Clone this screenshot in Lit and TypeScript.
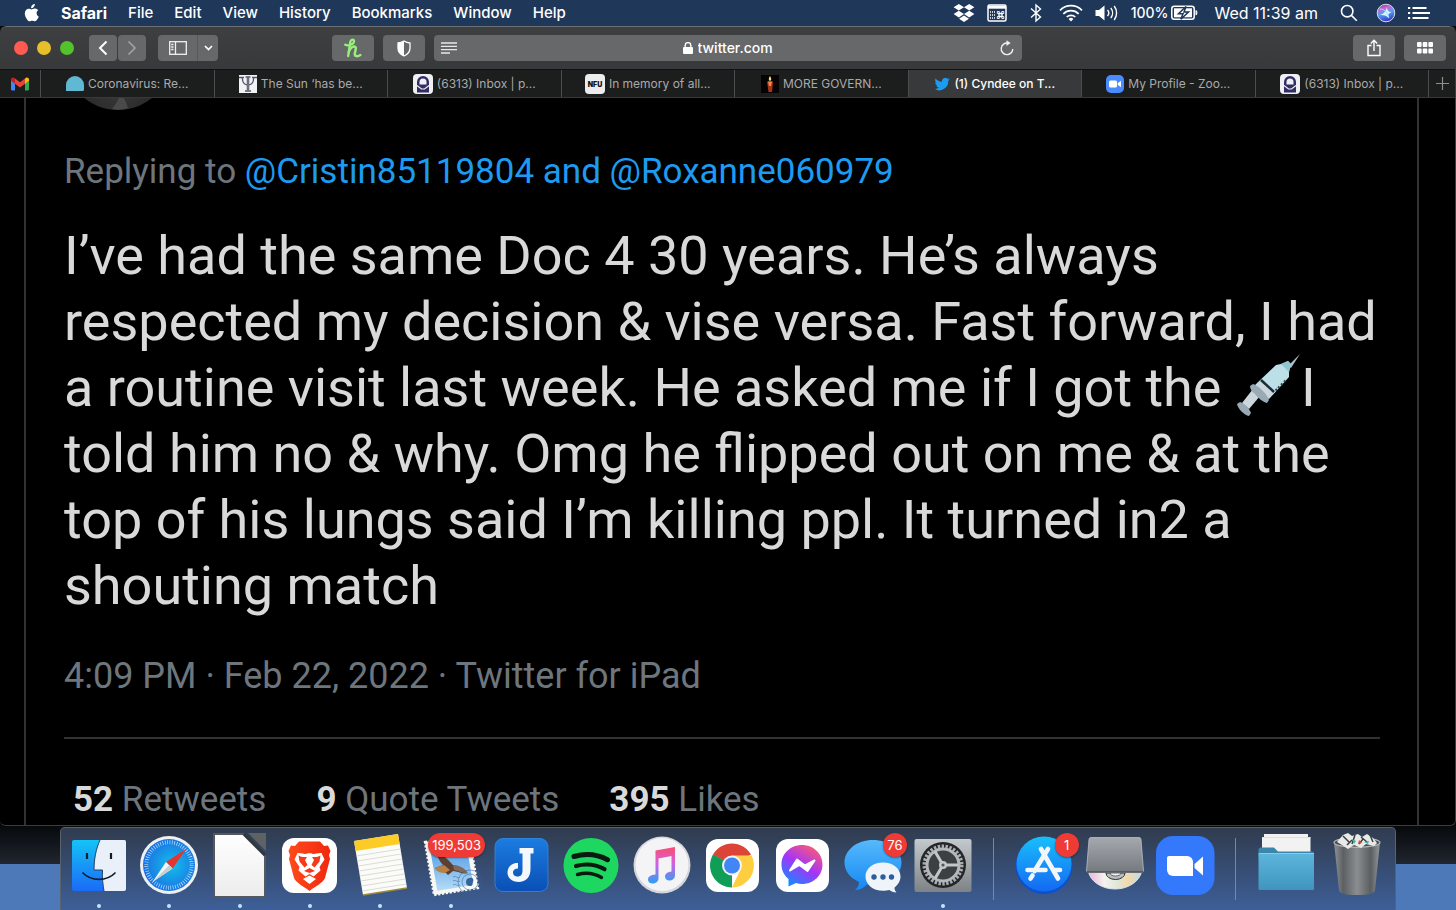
import { LitElement, html, svg, css, nothing, type TemplateResult } from "lit";
import { customElement, property } from "lit/decorators.js";
import { classMap } from "lit/directives/class-map.js";

type Art = TemplateResult;

const range = (n: number) => Array.from({ length: n }, (_, i) => i);

/* ---------- Menu bar ---------- */

@customElement("menu-bar")
export class MenuBar extends LitElement {
  static styles = css`
    :host {
      display: flex;
      align-items: center;
      height: 26px;
      flex: none;
      padding: 0 26px 0 23px;
      background: #1f3759;
      color: #fff;
      font: 500 15px/24px Inter, "Liberation Sans", sans-serif;
    }
    nav {
      display: flex;
      align-items: center;
      gap: 21px;
    }
    button {
      all: unset;
      white-space: nowrap;
      cursor: default;
    }
    .app {
      font-size: 16px;
      font-weight: 700;
    }
    .status {
      display: flex;
      align-items: center;
      margin-left: auto;
      gap: 12px;
    }
    .power {
      display: flex;
      align-items: center;
      gap: 3px;
      font-size: 14px;
    }
    .clock {
      margin: 0 10px 0 4px;
      font-size: 16px;
      font-weight: 400;
      white-space: nowrap;
    }
    .tight {
      margin-left: 6px;
    }
    svg {
      display: block;
    }
  `;

  render() {
    const menus = ["File", "Edit", "View", "History", "Bookmarks", "Window", "Help"];
    return html`
      <nav aria-label="Application menu">
        <button aria-label="Apple menu">
          <svg width="17" height="20" viewBox="0 0 17 20" fill="#fff">
            <path d="M11.8 1c.1 1.2-.4 2.2-1.1 3-.7.8-1.7 1.3-2.6 1.2-.1-1.1.4-2.200 1-2.900C9.800 1.500 11 1 11.800 1zM15.300 7.300c-1.200.8-1.700 1.700-1.700 2.900 0 1.500.9 2.700 2.200 3.200-.4 1.200-1 2.300-1.700 3.200-.7 1-1.300 1.700-2.300 1.700s-1.400-.6-2.600-.6-1.700.6-2.700.6-1.700-.8-2.400-1.800C2.700 14.600 1.800 12.500 1.800 10.500c0-3.100 2-4.800 4-4.800 1.100 0 2 .7 2.700.7s1.700-.8 3-.8c.5 0 2.500.1 3.800 1.700z"/>
          </svg>
        </button>
        <button class="app">Safari</button>
        ${menus.map((m) => html`<button>${m}</button>`)}
      </nav>
      <div class="status">
        <button aria-label="Dropbox">
          <svg width="22" height="20" viewBox="0 0 22 20" fill="#fff">
            <path d="M5.800 1 11 4.300 5.800 7.600.6 4.300zM16.200 1l5.200 3.300-5.200 3.300L11 4.300zM5.800 7.800 11 11.100l-5.200 3.300L.6 11.100zM16.200 7.800l5.200 3.300-5.200 3.300L11 11.100zM11 12.500l5 3.200-5 3.300-5-3.300z"/>
          </svg>
        </button>
        <button aria-label="Keyboard viewer">
          <svg width="20" height="18" viewBox="0 0 20 18" fill="none" stroke="#fff">
            <rect x="1" y="1" width="18" height="16" rx="1.500" stroke-width="1.500"/>
            <path d="M1 3.200h18" stroke-width="3"/>
            <path d="M3 8h5M3 11h5M3 14h5" stroke-width="1.300" stroke-dasharray="1 1"/>
            <path d="M11.300 9.500h4.400M11.300 12.500h4.400M12 8.800v4.400M15 8.800v4.400" stroke-width="1.300"/>
            <path d="M10.300 7.500h2v2h-2zM14.800 7.500h2v2h-2zM10.300 12.500h2v2h-2zM14.800 12.500h2v2h-2z" stroke-width=".9"/>
          </svg>
        </button>
        <button class="tight" aria-label="Bluetooth">
          <svg width="22" height="20" viewBox="0 0 22 20" fill="none" stroke="#fff" stroke-width="1.400">
            <path d="m6 5.500 9.500 8.500L11 18V2l4.500 4L6 14.500"/>
          </svg>
        </button>
        <button aria-label="Wi-Fi">
          <svg width="24" height="18" viewBox="0 0 24 18" fill="none" stroke="#fff" stroke-width="1.700">
            <path d="M1 6.300a15.500 15.500 0 0 1 22 0M4.300 9.800a11 11 0 0 1 15.400 0M7.700 13a6.300 6.300 0 0 1 8.600 0"/>
            <path d="m9.600 15 2.400 2.600 2.400-2.600a3.400 3.400 0 0 0-4.800 0z" fill="#fff" stroke="none"/>
          </svg>
        </button>
        <button aria-label="Volume">
          <svg width="24" height="18" viewBox="0 0 24 18" fill="none" stroke="#fff" stroke-width="1.400">
            <path d="M.5 6H4l5.500-4.500v15L4 12H.5z" fill="#fff" stroke="none"/>
            <path d="M12.500 6a4.500 4.500 0 0 1 0 6M15.800 4a8 8 0 0 1 0 10M19.200 2a11.500 11.500 0 0 1 0 14"/>
          </svg>
        </button>
        <span class="power">
          100%
          <svg width="27" height="16" viewBox="0 0 27 16">
            <rect x=".8" y="1.300" width="22.400" height="13" rx="2.500" fill="none" stroke="#fff" stroke-width="1.500"/>
            <path d="M3 3.300h18v9H3z" fill="#fff"/>
            <path d="M25 5.500c1.200.4 1.200 4.200 0 4.600z" fill="#fff" stroke="#fff"/>
            <path d="M15 1.500 7.500 8.700H12L9.800 14.300l7.700-7.200H13z" fill="#fff" stroke="#1f3759" stroke-width="1.500"/>
          </svg>
        </span>
        <span class="clock">Wed 11:39 am</span>
        <button aria-label="Spotlight">
          <svg width="18" height="18" viewBox="0 0 18 18" fill="none" stroke="#fff" stroke-width="1.600">
            <circle cx="7.200" cy="7.200" r="5.700"/><path d="m11.400 11.400 5.400 5.400"/>
          </svg>
        </button>
        <button class="tight" aria-label="Siri">
          <svg width="20" height="20" viewBox="0 0 20 20">
            <defs>
              <linearGradient id="siri" x1="0" y1="0" x2=".3" y2="1">
                <stop offset="0" stop-color="#4a2f8f"/><stop offset=".3" stop-color="#d35fd0"/>
                <stop offset=".6" stop-color="#4aa5f5"/><stop offset="1" stop-color="#3e3bd1"/>
              </linearGradient>
            </defs>
            <circle cx="10" cy="10" r="8.800" fill="url(#siri)" stroke="#d8dbe6" stroke-width="1"/>
            <path d="M3.500 12C7 11.500 9.500 9 11 4c.2 3 .8 4.500 4.500 5.500-3 .6-3.800 2-2.500 6-2.500-3-4.500-3.800-9.500-3.500z" fill="#d9f4ff"/>
            <path d="M4 6c4 0 7 2.500 9 9" stroke="#8fe6ff" fill="none"/>
          </svg>
        </button>
        <button aria-label="Notification Centre">
          <svg width="22" height="14" viewBox="0 0 22 14" stroke="#fff" stroke-width="2">
            <path d="M0 2h2.200M0 7h2.200M0 12h2.200M4.500 2h14M4.500 7h17.500M4.500 12h16"/>
          </svg>
        </button>
      </div>
    `;
  }
}

/* ---------- Browser toolbar ---------- */

@customElement("browser-toolbar")
export class BrowserToolbar extends LitElement {
  static styles = css`
    :host {
      display: grid;
      grid-template-columns: 1fr minmax(0, 588px) 1fr;
      align-items: center;
      gap: 9px;
      height: 42px;
      padding: 0 9px;
      background: linear-gradient(#3e3f40, #38393b);
      border-top: 1px solid #6b6e72;
      border-radius: 6px 6px 0 0;
      font: 500 14px/26px Inter, "Liberation Sans", sans-serif;
      color: #fff;
    }
    .left,
    .right {
      display: flex;
      align-items: center;
    }
    .lights {
      display: flex;
      gap: 9px;
      margin: 0 15px 0 5px;
    }
    .light {
      all: unset;
      width: 14px;
      height: 14px;
      border-radius: 50%;
    }
    .red { background: #ff5b52; }
    .yellow { background: #e6c02a; }
    .green { background: #53c22b; }
    .tool {
      all: unset;
      box-sizing: border-box;
      display: grid;
      place-items: center;
      height: 26px;
      width: 42px;
      border-radius: 4px;
      background: #66686a;
    }
    .nav {
      width: 28px;
      margin-right: 1px;
    }
    .side {
      width: 39px;
      margin-left: 11px;
      border-radius: 4px 0 0 4px;
    }
    .drop {
      width: 21px;
      border-left: 1px solid #58595b;
      border-radius: 0 4px 4px 0;
    }
    .ext {
      display: flex;
      gap: 9px;
      margin-left: auto;
    }
    .address {
      display: grid;
      grid-template-columns: 30px 1fr 30px;
      align-items: center;
      height: 26px;
      border-radius: 4px;
      background: #66686a;
    }
    .icon {
      all: unset;
      display: grid;
      place-items: center;
    }
    .site {
      display: flex;
      justify-content: center;
      align-items: center;
      gap: 5px;
    }
    input {
      all: unset;
      width: 75px;
    }
    .right {
      justify-content: flex-end;
      gap: 9px;
    }
    svg {
      display: block;
    }
  `;

  render() {
    return html`
      <div class="left">
        <div class="lights">
          <button class="light red" aria-label="Close"></button>
          <button class="light yellow" aria-label="Minimise"></button>
          <button class="light green" aria-label="Full screen"></button>
        </div>
        <button class="tool nav" aria-label="Back">
          <svg width="12" height="16" viewBox="0 0 12 16" fill="none" stroke="#fff" stroke-width="2"><path d="M9.500 1.500 3 8l6.500 6.500"/></svg>
        </button>
        <button class="tool nav" aria-label="Forward">
          <svg width="12" height="16" viewBox="0 0 12 16" fill="none" stroke="#a2a3a4" stroke-width="1.600"><path d="M2.500 1.500 9 8l-6.500 6.500"/></svg>
        </button>
        <button class="tool side" aria-label="Show sidebar">
          <svg width="18" height="14" viewBox="0 0 18 14" fill="none" stroke="#f2f2f2" stroke-width="1.300">
            <rect x=".7" y=".7" width="16.600" height="12.600"/><path d="M6.500 1v12M2.200 3.500h2.300M2.200 6h2.300M2.200 8.500h2.300"/>
          </svg>
        </button>
        <button class="tool drop" aria-label="Sidebar options">
          <svg width="9" height="6" viewBox="0 0 9 6" fill="none" stroke="#fff" stroke-width="1.700"><path d="m1 1 3.500 3.500L8 1"/></svg>
        </button>
        <div class="ext">
          <button class="tool" aria-label="Honey">
            <svg width="18" height="20" viewBox="0 0 18 20" fill="none" stroke="#98ef7c" stroke-linecap="round" stroke-linejoin="round">
              <path d="M1.300 6.800c3 1.300 8.500-.2 8.700-3.600.1-2.500-3.300-2.200-3.800 1L4.200 18" stroke-width="2.300"/>
              <path d="M4.800 14c1-3.300 3.500-5.800 5.500-5.500 3 .4.700 4.500.5 7.200-.1 3 3 3 5.500 1.300" stroke-width="2.500"/>
            </svg>
          </button>
          <button class="tool" aria-label="Privacy report">
            <svg width="14" height="17" viewBox="0 0 14 17">
              <path d="M7 1c2 1.300 4 1.900 6 2v5c0 4-2.500 6.500-6 8-3.500-1.500-6-4-6-8V3c2-.1 4-.7 6-2z" fill="none" stroke="#fff" stroke-width="1.300"/>
              <path d="M7 1v15c-3.500-1.500-6-4-6-8V3c2-.1 4-.7 6-2z" fill="#fff"/>
            </svg>
          </button>
        </div>
      </div>
      <div class="address">
        <button class="icon" aria-label="Reader">
          <svg width="16" height="12" viewBox="0 0 16 12" stroke="#e8e8e8" stroke-width="1.300"><path d="M0 1h16M0 4.300h16M0 7.600h16M0 11h9"/></svg>
        </button>
        <div class="site">
          <svg width="10" height="12" viewBox="0 0 10 12"><rect x="0" y="5" width="10" height="7" rx="1" fill="#fff"/><path d="M2.200 5V3.400a2.800 2.800 0 0 1 5.600 0V5" fill="none" stroke="#fff" stroke-width="1.400"/></svg>
          <input aria-label="Address" value="twitter.com" />
        </div>
        <button class="icon" aria-label="Reload">
          <svg width="14" height="16" viewBox="0 0 14 16" fill="none" stroke="#f0f0f0" stroke-width="1.400"><path d="M8 3.100A5.800 5.800 0 1 0 12.800 9"/><path d="M6.500.3 10.600 3.100 6.500 6z" fill="#f0f0f0" stroke="none"/></svg>
        </button>
      </div>
      <div class="right">
        <button class="tool" aria-label="Share">
          <svg width="14" height="18" viewBox="0 0 14 18" fill="none" stroke="#fff" stroke-width="1.400"><path d="M4.500 6.500H1v10h12v-10H9.500M7 12V1.500M3.800 4.500 7 1.300l3.200 3.200"/></svg>
        </button>
        <button class="tool" aria-label="Tab overview">
          <svg width="16" height="12" viewBox="0 0 16 12" fill="#fff"><rect width="4.600" height="5" rx="1"/><rect x="5.700" width="4.600" height="5" rx="1"/><rect x="11.400" width="4.600" height="5" rx="1"/><rect y="6.500" width="4.600" height="5" rx="1"/><rect x="5.700" y="6.500" width="4.600" height="5" rx="1"/><rect x="11.400" y="6.500" width="4.600" height="5" rx="1"/></svg>
        </button>
      </div>
    `;
  }
}

/* ---------- Tab strip ---------- */

const favicons: Record<string, Art> = {
  dome: html`<svg width="18" height="20" viewBox="0 0 18 20"><path d="M0 17V11a9 9 0 0 1 18 0v4.500a1.500 1.500 0 0 1-1.500 1.500z" fill="#5fb9d3"/></svg>`,
  psi: html`<svg width="18" height="18" viewBox="0 0 18 18"><rect width="18" height="18" fill="#f2f2f4"/><path d="M0 2.500h5M13 2.500h5M3.500 2.500c-.5 5 2 7.500 5.500 7.500s6-2.500 5.500-7.500M6 16h6M6.500 2h5" fill="none" stroke="#55566b" stroke-width="1.300"/><path d="M9 1.500V16" stroke="#6d6e80" stroke-width="2.600"/></svg>`,
  mail: html`<svg width="20" height="20" viewBox="0 0 20 20"><rect width="20" height="20" rx="4" fill="#efeff4"/><path d="M4 18.500V8a6 6 0 0 1 12 0v10.500z" fill="#312e66"/><path d="M6.500 10.500V8a3.500 3.500 0 0 1 7 0v2.500z" fill="#efeff4"/><path d="m4 11.500 4.500 3.500h3l4.500-3.500" fill="none" stroke="#efeff4" stroke-width="1.200"/></svg>`,
  nfu: html`<svg width="20" height="20" viewBox="0 0 20 20"><rect width="20" height="20" rx="4" fill="#ececec"/><text x="10" y="13" text-anchor="middle" font-family="Inter, sans-serif" font-size="7" font-weight="900" fill="#111">NFU</text></svg>`,
  candle: html`<svg width="18" height="18" viewBox="0 0 18 18"><rect width="18" height="18" fill="#050303"/><path d="M9 1c1.800 2.500 1.500 4.500 0 5-1.500-.5-1.800-2.500 0-5z" fill="#ffd98a"/><path d="M6 6.500h6L11 17H7.500z" fill="#a83418"/><path d="M7 6.500h4L10 11H8z" fill="#f08a4b"/></svg>`,
  bird: html`<svg width="16" height="16" viewBox="0 0 24 24"><path fill="#1d9bf0" d="M23.600 4.900c-.8.400-1.700.6-2.700.8 1-.6 1.700-1.500 2-2.600-.9.500-1.900.9-3 1.100A4.700 4.700 0 0 0 12 8.500C8 8.300 4.600 6.400 2.300 3.600c-1.200 2.200-.6 4.900 1.400 6.300-.8 0-1.500-.2-2.100-.6 0 2.300 1.600 4.200 3.800 4.700-.7.200-1.400.2-2.100.1.600 1.900 2.300 3.200 4.400 3.300A9.500 9.500 0 0 1 .7 19.300a13.400 13.400 0 0 0 20.600-11.900c.9-.7 1.700-1.500 2.300-2.500z"/></svg>`,
  zoom: html`<svg width="18" height="18" viewBox="0 0 18 18"><rect width="18" height="18" rx="5" fill="#4a8cff"/><rect x="3" y="5.500" width="8" height="7" rx="1.500" fill="#fff"/><path d="m11.700 8.200 3.300-2.400v6.400l-3.300-2.400z" fill="#fff"/></svg>`,
};

@customElement("tab-strip")
export class TabStrip extends LitElement {
  static styles = css`
    :host {
      display: flex;
      height: 29px;
      box-sizing: border-box;
      background: #1c1d1d;
      border-top: 1px solid #111;
      border-bottom: 1px solid #39393b;
      font: 400 12px/24px Inter, "Liberation Sans", sans-serif;
      color: #a9aaab;
    }
    button {
      all: unset;
      box-sizing: border-box;
      display: flex;
      align-items: center;
      justify-content: center;
      gap: 4px;
      border-right: 1px solid #4b4c4d;
      white-space: nowrap;
    }
    .tab {
      flex: 1 1 0;
      min-width: 0;
      overflow: hidden;
    }
    .pinned {
      flex: none;
      width: 41px;
    }
    .active {
      background: #38393b;
      color: #fff;
      font-weight: 500;
    }
    .new {
      flex: none;
      width: 26px;
      border-right: 0;
    }
    svg {
      flex: none;
    }
  `;

  render() {
    const tabs = [
      { icon: "dome", label: "Coronavirus: Re..." },
      { icon: "psi", label: "The Sun ‘has be..." },
      { icon: "mail", label: "(6313) Inbox | p..." },
      { icon: "nfu", label: "In memory of all..." },
      { icon: "candle", label: "MORE GOVERN..." },
      { icon: "bird", label: "(1) Cyndee on T...", active: true },
      { icon: "zoom", label: "My Profile - Zoo..." },
      { icon: "mail", label: "(6313) Inbox | p..." },
    ];
    return html`
      <button class="pinned" aria-label="Gmail">
        <svg width="18" height="14" viewBox="0 0 18 14">
          <path d="M0 2.500v9.800c0 .7.500 1.200 1.200 1.200H4V6z" fill="#4285f4"/>
          <path d="M18 2.500v9.800c0 .7-.5 1.200-1.200 1.200H14V6z" fill="#34a853"/>
          <path d="M0 2.500C0 .7 2 0 3.300 1L4 1.500V6.700L0 3.700z" fill="#c5221f"/>
          <path d="M4 1.500 9 5.300l5-3.800v5.200l-5 3.800-5-3.800z" fill="#ea4335"/>
          <path d="M18 2.500C18 .7 16 0 14.700 1l-.7.500V6.700l4-3z" fill="#fbbc04"/>
        </svg>
      </button>
      ${tabs.map(
        (t) => html`<button class=${classMap({ tab: true, active: !!t.active })}>${favicons[t.icon]}<span>${t.label}</span></button>`,
      )}
      <button class="new" aria-label="New tab">
        <svg width="13" height="13" viewBox="0 0 13 13" stroke="#8c8d8e" stroke-width="1.200"><path d="M6.500 0v13M0 6.500h13"/></svg>
      </button>
    `;
  }
}

/* ---------- Tweet ---------- */

@customElement("tweet-view")
export class TweetView extends LitElement {
  static styles = css`
    :host {
      display: block;
      flex: 1;
      min-height: 0;
      overflow: hidden;
      padding: 0 36px 0 24px;
      background: #000;
      font-family: Roboto, "Liberation Sans", sans-serif;
    }
    article {
      padding: 0 37px 0 38px;
      border: solid #2f3336;
      border-width: 0 2px;
    }
    .avatar {
      display: block;
      width: 108px;
      height: 108px;
      margin-top: -96px;
    }
    p {
      margin: 0;
    }
    .replying {
      margin-top: 37px;
      font-size: 35px;
      line-height: 50px;
      color: #6e767d;
    }
    a {
      color: #1d9bf0;
      text-decoration: none;
    }
    .body {
      margin-top: 26px;
      font-size: 54px;
      line-height: 66px;
      color: #d9d9d9;
      white-space: nowrap;
    }
    .emoji {
      width: 66px;
      height: 66px;
      margin: -12px 0;
      vertical-align: -1px;
    }
    .meta {
      margin-top: 32px;
      font-size: 36px;
      line-height: 50px;
      color: #6e767d;
    }
    .stats {
      display: flex;
      gap: 50px;
      margin-top: 36px;
      padding: 39px 9px 24px;
      border-top: 2px solid #2f3336;
      font-size: 35px;
      line-height: 44px;
    }
    .stats a {
      color: #6e767d;
    }
    .stats strong {
      color: #d9d9d9;
      font-weight: 700;
    }
  `;

  render() {
    const stats = [
      ["52", "Retweets"],
      ["9", "Quote Tweets"],
      ["395", "Likes"],
    ];
    return html`
      <article>
        <svg class="avatar" viewBox="0 0 108 108" aria-label="Profile picture">
          <defs>
            <radialGradient id="face" cx=".5" cy=".75" r=".5">
              <stop offset="0" stop-color="#3c3c3c"/><stop offset="1" stop-color="#222"/>
            </radialGradient>
          </defs>
          <circle cx="54" cy="54" r="54" fill="url(#face)"/>
          <path d="M56 92c4 3 6 8 8 14-6 2-10 2-16 1 3-4 7-9 8-15z" fill="#4a4a4a"/>
        </svg>
        <p class="replying">Replying to <a href="#">@Cristin85119804</a><a href="#"> and </a><a href="#">@Roxanne060979</a></p>
        <p class="body">I’ve had the same Doc 4 30 years. He’s always<br />respected my decision &amp; vise versa. Fast forward, I had<br />a routine visit last week. He asked me if I got the ${this.syringe()}I<br />told him no &amp; why. Omg he flipped out on me &amp; at the<br />top of his lungs said I’m killing ppl. It turned in2 a<br />shouting match</p>
        <p class="meta">4:09 PM · Feb 22, 2022 · Twitter for iPad</p>
        <div class="stats">
          ${stats.map(([n, label]) => html`<a href="#"><strong>${n}</strong> ${label}</a>`)}
        </div>
      </article>
    `;
  }

  private syringe() {
    return html`<svg class="emoji" viewBox="0 0 66 66" role="img" aria-label="syringe">
      <path d="M53 13 65 1 56 15z" fill="#a9c0cc"/>
      <path d="m18 36 7 7-11 13-7-6z" fill="#ccd6dd"/>
      <path d="m2 51 3-2c5 2 9 6 11 11l-2 3c-5-1-11-7-12-12z" fill="#99aab5"/>
      <path d="M20 32 41 12l5-1 7-3 3 3-2 8v5L34 46z" fill="#bddfe8"/>
      <path d="m46 11 7-3 3 3-2 8z" fill="#8fc4d0"/>
      <path d="m20 33 7-6 13 12-7 7z" fill="#ccd6dd"/>
      <path d="m26 27 13 12" stroke="#1d2a33" stroke-width="2.500"/>
      <path d="M43 33.500l1.500 1.500M46 30.500l1.500 1.500M49 27.500l1.500 1.500M40.500 36l1.500 1.500" stroke="#31444f" stroke-width="2"/>
      <path d="m15 33 3-2c6 2 14 10 16 16l-2 3c-4-1-9-5-12-9-3-2-5-5-5-8z" fill="#99aab5"/>
    </svg>`;
  }
}

/* ---------- Dock ---------- */

const dockArt: Record<string, () => Art> = {
  Finder: () => svg`
    <defs><linearGradient id="fb" x1="0" y1="0" x2="0" y2="1"><stop offset="0" stop-color="#14c3f7"/><stop offset="1" stop-color="#1b6bf6"/></linearGradient></defs>
    <rect x="5" y="12" width="54" height="51" rx="2" fill="url(#fb)"/>
    <path d="M33 12h24a2 2 0 0 1 2 2v47a2 2 0 0 1-2 2H37c-1-6-2-13-1.500-21H27c0-11 2-21 6-30z" fill="#e9f0f9"/>
    <path d="M33 12c-4 9-6 19-6 30h8.500c-.5 8 .5 15 1.500 21" fill="none" stroke="#21456b" stroke-width="1"/>
    <path d="M20 25v6M44 25v6" stroke="#111c2b" stroke-width="2.200"/>
    <path d="M16 45c8 8.500 24 8.500 32 0" fill="none" stroke="#111c2b" stroke-width="1.700" stroke-linecap="round"/>`,
  Safari: () => svg`
    <defs><radialGradient id="sb" cx=".55" cy=".5" r=".55"><stop offset="0" stop-color="#14c0ea"/><stop offset="1" stop-color="#1a6fe2"/></radialGradient></defs>
    <circle cx="32" cy="37" r="29" fill="#eef0f2"/><circle cx="32" cy="37" r="26" fill="url(#sb)"/>
    <circle cx="32" cy="37" r="22.700" fill="none" stroke="#d9f1ff" stroke-width="4" stroke-dasharray=".6 1.777"/>
    <path d="M49.500 20.500 35.500 40.500l-6.500-6.500z" fill="#e5352e"/><path d="M15.500 54 29 34l6.500 6.500z" fill="#f4f4f4"/>
    <path d="M15.500 54 35.500 40.500l-3.300-3.300z" fill="#c9ced4"/>`,
  LibreOffice: () => svg`
    <defs><linearGradient id="lo" x1="0" y1="0" x2="0" y2="1"><stop offset="0" stop-color="#fff"/><stop offset="1" stop-color="#ececec"/></linearGradient></defs>
    <path d="M6 6h29l22 22v41H6z" fill="url(#lo)" stroke="#55585c" stroke-width="2"/>
    <path d="M40 5h18v18z" fill="#5f6264"/><path d="M36 6 57 27" stroke="#33373b" stroke-width="2.500"/>`,
  Brave: () => svg`
    <defs><linearGradient id="br" x1="0" y1="0" x2="1" y2="0"><stop offset="0" stop-color="#ff4a1c"/><stop offset="1" stop-color="#f0280f"/></linearGradient></defs>
    <rect x="4" y="10" width="55" height="55" rx="12" fill="#fff"/>
    <g transform="translate(-1 0)">
      <path d="M22 13.500h21l4 4.500 4-.5 2.500 5.500-1.500 4 1 4-5 19c-2 5-10 8.500-15.500 13C27 58.500 19 55 17 50l-5-19 1-4-1.500-4L14 17.500l4 .5z" fill="url(#br)"/>
      <path d="M20.500 25c4-.5 6.500 1.500 9 .7 2-.5 4-.5 6 0 2.500.8 5-1.200 9-.7l3 6.500-5 7.500 1 3.500-7 6-4-2.500-4 2.500-7-6 1-3.500-5-7.500z" fill="#fff"/>
      <path d="M21.500 27.500c3 2 6 1.500 8.500 1.500l-2 3 2.500 5-3 2.500-5-6zM43.500 27.500c-3 2-6 1.500-8.500 1.500l2 3-2.500 5 3 2.500 5-6zM27 43l5.500-3 5.500 3-5.500 2z" fill="#f8381a"/>
      <path d="m26 51 6.500-3.500L39 51l-6.500 5z" fill="#fff"/>
    </g>`,
  Notes: () => svg`
    <path d="m6 13 44-7 9 54-44 7z" fill="#fbfbf8"/>
    <path d="m6 13 44-7 1.700 10-44 7z" fill="#fccb26"/>
    ${range(8).map((i) => svg`<path d=${`m${8.5 + i * 0.83} ${28 + i * 5} 44-7`} stroke="#d2d2cf" stroke-width=".8"/>`)}
    <path d="m15 67 44-7" stroke="#a08a3c" stroke-width="1.300"/>`,
  Mail: () => svg`
    <defs><linearGradient id="ms" x1="0" y1="0" x2="0" y2="1"><stop offset="0" stop-color="#3f8fe0"/><stop offset="1" stop-color="#b5dcf7"/></linearGradient></defs>
    <path d="m6 14 44-7 9 53-44 7z" fill="#f7f7f4" stroke="#f7f7f4" stroke-width="2.400" stroke-dasharray="2.200 1.700"/>
    <path d="m10.500 17.500 36-5.500 7.800 45-36 5.700z" fill="url(#ms)"/>
    <path d="M17 22c1 6 3 11 7 15l-8 3c2 4 7 4 9 3l4 4 5-4c5 0 10 4 14 2-2-4-8-7-14-8-4-4-8-9-17-15z" fill="#5d4030"/>
    <path d="M34 37c6 0 12 3 15 8-4 1-9-2-14-3z" fill="#7d6a5d"/>
    <path d="m16 40 9-3 6 5-5 3c-4 0-8-1-10-5z" fill="#b78345"/>
    <g fill="none" stroke="#34639a" stroke-width=".9" opacity=".6"><circle cx="51" cy="54" r="12"/><circle cx="51" cy="54" r="8"/><path d="M34 49c3-2 4 2 7 0M34 53c3-2 4 2 7 0M34 57c3-2 4 2 7 0"/></g>
    <path d="M51 50c3-1 4 2 3 4s0 4-3 4-4-2-4-4 1-4 4-4z" fill="#34639a"/>`,
  Joplin: () => svg`
    <defs><linearGradient id="jp" x1="0" y1="0" x2="0" y2="1"><stop offset="0" stop-color="#1c7ce0"/><stop offset="1" stop-color="#0a4fb5"/></linearGradient></defs>
    <rect x="6" y="10.500" width="53" height="53" rx="8" fill="url(#jp)" stroke="#2f8cea" stroke-width=".8"/>
    <path d="M30.500 20H44.500v5.500H41.500V41c0 8-4.500 13-12 13-6 0-11-3.500-11-9.500 0-6 5-10 10.500-9.500v5.500c-2.500 0-5 1.500-5 4s2 4 4.500 4c3.500 0 5-2 5-6.500V25.500h-3z" fill="#f4f7fb"/>`,
  Spotify: () => svg`
    <circle cx="32" cy="37.500" r="27.500" fill="#1ed760"/>
    <g fill="none" stroke="#0b1a10" stroke-linecap="round"><path d="M15 28.500c12-3.500 23-2.500 33.500 3.200" stroke-width="5"/><path d="M17 38c10-2.700 20-1.500 28.500 3.200" stroke-width="4.200"/><path d="M18.500 46.500c8-2.200 16.500-1.500 24 3" stroke-width="3.400"/></g>`,
  Music: () => svg`
    <defs>
      <linearGradient id="mu" x1="0" y1="0" x2="0" y2="1"><stop offset="0" stop-color="#f84e6f"/><stop offset=".45" stop-color="#d65fe0"/><stop offset="1" stop-color="#27a2f5"/></linearGradient>
    </defs>
    <circle cx="32" cy="37" r="28.500" fill="#d5d7da"/><circle cx="32" cy="36.600" r="26.500" fill="#f4f4f6"/>
    <path d="M25.500 22.500 45 19v28c0 4-3 5.500-5.500 5.500S35 51 35 48.500c0-3 3-4.500 6.500-5V28L28.500 30.500V50c0 4-3 5.500-6 5.500-2.500 0-4.500-1.500-4.500-4 0-3 3-4.500 7.500-5z" fill="url(#mu)"/>`,
  Chrome: () => svg`
    <rect x="6" y="11" width="53" height="53" rx="12" fill="#fff"/>
    <path d="M32 37.500 13 26.500A22 22 0 0 1 51 26.500z" fill="#db4437"/>
    <path d="M32 37.500 32 59.500A22 22 0 0 1 13 26.500z" fill="#0f9d58"/>
    <path d="M32 27.500h19.500a22 22 0 0 1-19.500 32l8-17z" fill="#ffcd40"/>
    <path d="M13 26.500 24 43l8-6z" fill="#0f9d58"/>
    <circle cx="32" cy="37.500" r="10" fill="#f3f3f3"/><circle cx="32" cy="37.500" r="8" fill="#4285f4"/>`,
  Messenger: () => svg`
    <defs><linearGradient id="me" x1=".2" y1="1" x2=".8" y2="0"><stop offset="0" stop-color="#0a91ff"/><stop offset=".5" stop-color="#a334fa"/><stop offset="1" stop-color="#ff5c70"/></linearGradient></defs>
    <rect x="6" y="11" width="53" height="53" rx="12" fill="#fff"/>
    <path d="M32 17c11.500 0 20.500 8.500 20.500 19.500S43.500 56 32 56c-2 0-4-.3-6-1l-7.500 3.500V51c-4.500-4-7-8.500-7-14.500C11.500 25.500 20.500 17 32 17z" fill="url(#me)"/>
    <path d="m20 42.500 7-11 8 6 9.500-5-7 10.500-8-6z" fill="#fff" stroke="#fff" stroke-width="2" stroke-linejoin="round"/>`,
  Messages: () => svg`
    <defs><linearGradient id="mb" x1="0" y1="0" x2="0" y2="1"><stop offset="0" stop-color="#56b9fb"/><stop offset="1" stop-color="#1488f4"/></linearGradient></defs>
    <path d="M32 12c16 0 28.500 10 28.500 22.500S48 57 32 57c-2 0-4 0-6-.5-3 3.500-7 5.500-12 5.500 3-2.500 4-5 4-8C9 50 3.500 43 3.500 34.500 3.500 22 16 12 32 12z" fill="url(#mb)"/>
    <path d="M42 34.500c10 0 17.500 6 17.500 14 0 4.500-2.500 8.500-6 11 0 2 .5 3.500 2 5-3 0-5.500-1-7-2.500-2 .5-4 .8-6.500.8-10 0-17.500-6.300-17.500-14.300s7.500-14 17.500-14z" fill="#eef4fa"/>
    <g fill="#2f5c9c"><circle cx="33" cy="49" r="2.700"/><circle cx="42" cy="49" r="2.700"/><circle cx="50.500" cy="49" r="2.700"/></g>`,
  "System Preferences": () => svg`
    <defs><linearGradient id="sp" x1="0" y1="0" x2="0" y2="1"><stop offset="0" stop-color="#c4c9cd"/><stop offset="1" stop-color="#7d8286"/></linearGradient></defs>
    <rect x="3.500" y="11" width="57" height="53" rx="2" fill="url(#sp)"/>
    <circle cx="32" cy="37" r="23" fill="#232527"/>
    <circle cx="32" cy="37" r="18.500" fill="none" stroke="#a9adb1" stroke-width="4" stroke-dasharray="2.400 1.475"/>
    <circle cx="32" cy="37" r="16" fill="#3d4043" stroke="#b4b8bb" stroke-width="3"/>
    <path d="M32 37h15M32 37l-8-13.500M32 37l-8 13.500" stroke="#c3c7ca" stroke-width="3"/><circle cx="32" cy="37" r="4" fill="#c3c7ca"/><circle cx="32" cy="37" r="1.600" fill="#555"/>`,
  "App Store": () => svg`
    <defs><linearGradient id="as" x1="0" y1="0" x2="0" y2="1"><stop offset="0" stop-color="#18bffb"/><stop offset="1" stop-color="#1569f2"/></linearGradient></defs>
    <circle cx="32" cy="37.500" r="28.500" fill="#0b50d0"/><circle cx="32" cy="36" r="27.500" fill="url(#as)"/>
    <g stroke="#f2f6fb" stroke-width="4.600" stroke-linecap="round"><path d="M36 21 22.500 43M29 21l17 29.500M15.500 42h18M41 42h7M20.500 47.500l-2 3"/></g>`,
  "Remote Disc": () => svg`
    <defs>
      <linearGradient id="rd" x1="0" y1="0" x2="0" y2="1"><stop offset="0" stop-color="#a5a9ae"/><stop offset="1" stop-color="#74797f"/></linearGradient>
      <linearGradient id="cd" x1="0" y1="0" x2="1" y2="0"><stop offset="0" stop-color="#e9b5d8"/><stop offset=".3" stop-color="#f3f3ee"/><stop offset=".55" stop-color="#dfe7d8"/><stop offset=".75" stop-color="#f4d9a8"/><stop offset="1" stop-color="#b8dcf0"/></linearGradient>
    </defs>
    <path d="M5.500 44a27 21 0 0 0 53 0z" fill="url(#cd)" stroke="#dfe3e6" stroke-width="1"/>
    <path d="M23 45a9.500 6.500 0 0 0 19 0z" fill="#b9bec2" stroke="#2b2f33"/><path d="M27 45a5.500 3 0 0 0 11 0z" fill="#f4f4f4" stroke="#44484c" stroke-width=".8"/>
    <path d="M8 9.500h48a2 2 0 0 1 2 1.800l2.500 31.700-1 1.500h-55l-1-1.500L6 11.300a2 2 0 0 1 2-1.800z" fill="url(#rd)" stroke="#b9bdc1" stroke-width=".8"/>
    <path d="M3.800 44h56.600" stroke="#4f5357" stroke-width="1.400"/>`,
  Zoom: () => svg`
    <rect x="3" y="8" width="58.500" height="59" rx="17" fill="#3478fb"/>
    <path d="M16 28h18a6 6 0 0 1 6 6v14H20a6 6 0 0 1-6-6V30a2 2 0 0 1 2-2z" fill="#fff"/><path d="m41.500 36 8.500-7.500v19L41.500 40z" fill="#fff"/>`,
  Documents: () => svg`
    <defs><linearGradient id="fo" x1="0" y1="0" x2="0" y2="1"><stop offset="0" stop-color="#5db6dd"/><stop offset="1" stop-color="#3f95bd"/></linearGradient></defs>
    <path d="M8 9h2V6h44v3h2.500v17H8z" fill="#f2f2f2"/><path d="M8 9.500h48.500" stroke="#dcdcdc" stroke-width=".8"/>
    <path d="M4.500 26v-4a2.500 2.500 0 0 1 2.500-2.500h13l4 4h34c1 0 2 .8 2 2v4h-55.500z" fill="#3b87ab"/>
    <path d="M4.500 25h55.500v35.500a1.500 1.500 0 0 1-1.500 1.500H6a1.500 1.500 0 0 1-1.500-1.500z" fill="url(#fo)"/><path d="M5 25.500h55" stroke="#86cde9"/>`,
  Trash: () => svg`
    <defs><linearGradient id="tr" x1="0" y1="0" x2="1" y2="0"><stop offset="0" stop-color="#909396"/><stop offset=".2" stop-color="#5d6063"/><stop offset=".5" stop-color="#8b8e91"/><stop offset=".8" stop-color="#5b5e61"/><stop offset="1" stop-color="#96999c"/></linearGradient></defs>
    <path d="m9 14 5 48c.5 4 6 5 18 5s17.500-1 18-5l5-48z" fill="url(#tr)"/>
    <ellipse cx="32" cy="14.500" rx="23" ry="4.800" fill="#4c4f52" stroke="#b4b7ba" stroke-width="1.200"/>
    <path d="m12 14 6-7 5-2 4 3 6-2 4 3 5-3 6 4 4 5-3 3-8-2-5 4-7-3-6 4-6-4z" fill="#e9e9e8"/>
    <path d="m18 8 6 6M30 7l-3 9M36 9l6 5M45 7l3 7M22 17l5-5M34 16l4-5" stroke="#3c3f42" stroke-width="1.500"/>
    <path d="m27 11 4 2-2 3zM39 14l5-1-1 3z" fill="#3bb0a0"/><path d="m34 12 3 3-4 1z" fill="#c4503c"/>`,
};

@customElement("dock-item")
export class DockItem extends LitElement {
  @property() name = "";
  @property() badge = "";
  @property({ type: Boolean }) running = false;

  static styles = css`
    :host {
      display: block;
      flex: 1 1 0;
      min-width: 0;
    }
    button {
      all: unset;
      display: flex;
      flex-direction: column;
      align-items: center;
      width: 100%;
      position: relative;
    }
    svg {
      display: block;
      width: 64px;
      height: 76px;
      overflow: visible;
    }
    .dot {
      width: 4px;
      height: 4px;
      border-radius: 50%;
      background: #c5e4fb;
    }
    .badge {
      position: absolute;
      top: 5px;
      right: 1px;
      min-width: 24px;
      box-sizing: border-box;
      padding: 0 4px;
      border-radius: 12px;
      background: #ee3b35;
      color: #fff;
      text-align: center;
      font: 400 13px/24px Inter, "Liberation Sans", sans-serif;
      box-shadow: 0 1px 2px rgba(0, 0, 0, 0.4);
    }
  `;

  render() {
    return html`
      <button aria-label=${this.name}>
        <svg viewBox="0 0 64 76" aria-hidden="true">${dockArt[this.name]?.()}</svg>
        ${this.badge ? html`<span class="badge">${this.badge}</span>` : nothing}
        ${this.running ? html`<span class="dot"></span>` : nothing}
      </button>
    `;
  }
}

@customElement("mac-dock")
export class MacDock extends LitElement {
  static styles = css`
    :host {
      display: flex;
      flex: none;
      height: 83px;
      box-sizing: border-box;
      margin: 0 60px;
      padding: 0 3px;
      border: 1px solid #59636f;
      border-bottom: 0;
      border-radius: 5px 5px 0 0;
      background: linear-gradient(#303c4e, #364b6f 45%, #3d5f98);
    }
    .sep {
      flex: none;
      width: 1px;
      height: 62px;
      margin: 10px 15px 0;
      background: #7089ad;
    }
  `;

  render() {
    const groups: Array<Array<[string, boolean?, string?]>> = [
      [
        ["Finder", true],
        ["Safari", true],
        ["LibreOffice", true],
        ["Brave", true],
        ["Notes", true],
        ["Mail", true, "199,503"],
        ["Joplin"],
        ["Spotify"],
        ["Music"],
        ["Chrome"],
        ["Messenger"],
        ["Messages", false, "76"],
        ["System Preferences", true],
      ],
      [["App Store", false, "1"], ["Remote Disc"], ["Zoom"]],
      [["Documents"], ["Trash"]],
    ];
    return html`${groups.map(
      (group, i) => html`
        ${i ? html`<span class="sep"></span>` : nothing}
        ${group.map(([name, running, badge]) => html`<dock-item .name=${name} .badge=${badge ?? ""} .running=${!!running}></dock-item>`)}
      `,
    )}`;
  }
}

/* ---------- Desktop ---------- */

@customElement("app-root")
export class AppRoot extends LitElement {
  static styles = css`
    :host {
      display: flex;
      flex-direction: column;
      height: 100vh;
      overflow: hidden;
      background: linear-gradient(to top, #4d79b8 0 46px, #20262f 46px, #07090c 84px);
    }
    .window {
      display: flex;
      flex-direction: column;
      flex: 1;
      min-height: 0;
      margin-bottom: 1px;
      border: solid #3a3c3e;
      border-width: 0 1px 1px 0;
      border-radius: 6px;
      overflow: hidden;
    }
  `;

  render() {
    return html`
      <menu-bar></menu-bar>
      <main class="window">
        <browser-toolbar></browser-toolbar>
        <tab-strip></tab-strip>
        <tweet-view></tweet-view>
      </main>
      <mac-dock></mac-dock>
    `;
  }
}
